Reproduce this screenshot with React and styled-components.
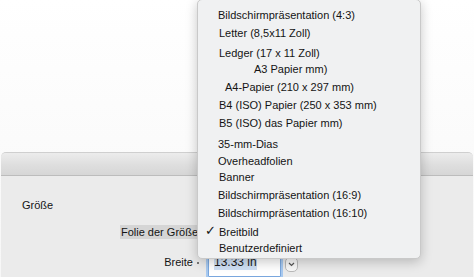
import React from 'react';
import styled, { createGlobalStyle } from 'styled-components';

const GlobalStyle = createGlobalStyle`
  body {
    margin: 0;
    font-family: "Liberation Sans", Arial, sans-serif;
    color: #141414;
  }
`;

const Page = styled.div`
  position: relative;
  width: 474px;
  height: 277px;
  overflow: hidden;
  background: linear-gradient(180deg, #ffffff 0%, #f7f7f7 100%);
  display: flex;
  flex-direction: column;
`;

const Backdrop = styled.div`
  height: 152px;
  flex-shrink: 0;
`;

const Sheet = styled.div`
  flex: 1;
  margin: 0 1px;
  border-radius: 5px 5px 0 0;
  border-top: 1px solid #cfcfcf;
  background: #ebebeb;
  display: flex;
  flex-direction: column;
`;

const TitleBar = styled.div`
  height: 22px;
  border-radius: 5px 5px 0 0;
  background: linear-gradient(180deg, #ececec 0%, #dedede 55%, #d6d6d6 100%);
  border-bottom: 1px solid #bcbcbc;
`;

const Body = styled.div`
  padding-top: 22px;
  font-size: 11px;
`;

const Heading = styled.div`
  padding-left: 21px;
  line-height: 14px;
  height: 14px;
`;

const Form = styled.div`
  display: grid;
  grid-template-columns: 197px 1fr;
  row-gap: 16px;
  margin-top: 13px;
  align-items: start;
`;

const Label = styled.div`
  justify-self: end;
  line-height: 14px;
  height: 14px;
  padding-left: 1px;
  background: ${p => (p.$active ? '#d5d5d5' : 'transparent')};
  margin-right: ${p => p.$gap || 0}px;
  position: relative;
`;

const Dot = styled.span`
  position: absolute;
  right: -6px;
  top: 7px;
  width: 2px;
  height: 2px;
  background: #777;
`;

const Field = styled.div`
  display: flex;
  align-items: flex-start;
  gap: 4px;
  padding-left: 10px;
  margin-top: -2px;
`;

const Input = styled.div`
  width: 73px;
  height: 24px;
  background: #ffffff;
  border: 1px solid #7aa7de;
  box-shadow: 0 0 0 2px #a8c9ef;
  border-radius: 1px;
  font-size: 12px;
  line-height: 17px;
  padding-left: 5px;
  box-sizing: border-box;
  color: #1a1a1a;
`;

const Selected = styled.span`
  background: #cfe0f5;
  padding: 1px 0;
`;

const Stepper = styled.div`
  width: 11px;
  height: 13px;
  margin-top: 4px;
  border: 1px solid #b9b9b9;
  border-radius: 5px;
  background: #f8f8f8;
  display: flex;
  align-items: center;
  justify-content: center;
`;

const Menu = styled.div`
  position: absolute;
  left: 197px;
  top: -1px;
  width: 224px;
  height: 260px;
  box-sizing: border-box;
  padding-top: 6px;
  background: #f0f1f2;
  border: 1px solid #c9c9c9;
  border-radius: 5px;
  box-shadow: 0 3px 12px rgba(0, 0, 0, 0.22);
  font-size: 11px;
`;

const Item = styled.div`
  position: relative;
  height: 18px;
  line-height: 18px;
  padding-left: ${p => 21 + (p.$indent || 0)}px;
  transform: translateY(${p => p.$shift || 0}px);
  white-space: nowrap;
`;

const Check = styled.span`
  position: absolute;
  left: 7px;
  top: -1px;
  font-size: 13px;
`;

const items = [
  { label: 'Bildschirmpräsentation (4:3)', indent: -1 },
  { label: 'Letter (8,5x11 Zoll)' },
  { label: 'Ledger (17 x 11 Zoll)', shift: 2 },
  { label: 'A3 Papier mm)', indent: 35 },
  { label: 'A4-Papier (210 x 297 mm)', indent: 6 },
  { label: 'B4 (ISO) Papier (250 x 353 mm)' },
  { label: 'B5 (ISO) das Papier mm)' },
  { label: '35-mm-Dias', indent: -1, shift: 3 },
  { label: 'Overheadfolien', indent: -1, shift: 2 },
  { label: 'Banner' },
  { label: 'Bildschirmpräsentation (16:9)', indent: -1 },
  { label: 'Bildschirmpräsentation (16:10)', indent: -1 },
  { label: 'Breitbild', checked: true, shift: 1 },
  { label: 'Benutzerdefiniert', shift: -1 },
];

const App = () => {
  return (
    <>
      <GlobalStyle />
      <Page>
        <Backdrop />
        <Sheet>
          <TitleBar />
          <Body>
            <Heading>Größe</Heading>
            <Form>
              <Label $active>Folie der Größe</Label>
              <div />
              <Label $gap={5}>
                Breite
                <Dot />
              </Label>
              <Field>
                <Input>
                  <Selected>13.33 in</Selected>
                </Input>
                <Stepper>
                  <svg width="7" height="5" viewBox="0 0 7 5">
                    <path d="M1 1 L3.5 3.5 L6 1" fill="none" stroke="#555" strokeWidth="1.2" />
                  </svg>
                </Stepper>
              </Field>
            </Form>
          </Body>
        </Sheet>
        <Menu>
          {items.map(it => (
            <Item key={it.label} $indent={it.indent} $shift={it.shift}>
              {it.checked && <Check>✓</Check>}
              {it.label}
            </Item>
          ))}
        </Menu>
      </Page>
    </>
  );
};

export default App;
